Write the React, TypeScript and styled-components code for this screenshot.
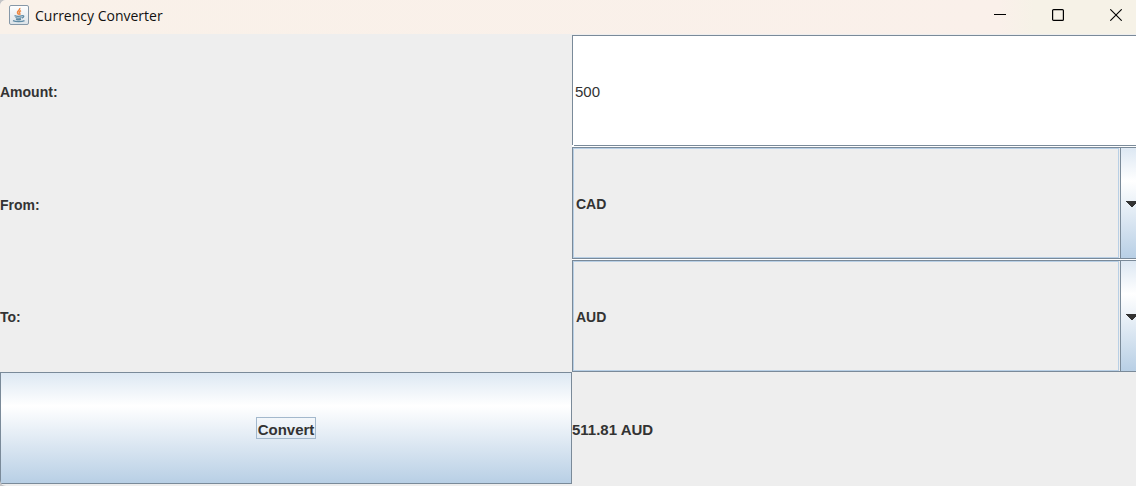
import React, { useState } from "react";
import styled, { createGlobalStyle } from "styled-components";

const line = "#7a8a99";
const soft = "#b8cfe5";
const steel = "linear-gradient(to bottom, #dde8f3 0%, #ffffff 30%, #b8cfe5 100%)";

const GlobalStyle = createGlobalStyle`
  *, *::before, *::after { box-sizing: border-box; }
  body { margin: 0; background: #c4c4c6; }
`;

const Window = styled.main`
  display: flex;
  flex-direction: column;
  min-height: 100vh;
  overflow: hidden;
  border-radius: 6px 0 0 6px;
  background: #eeeeee;
  color: #333333;
  font-family: "Liberation Sans", Arial, sans-serif;
  font-size: 15px;
  line-height: 20px;
`;

const TitleBar = styled.header`
  display: flex;
  align-items: center;
  height: 34px;
  padding: 0 0 4px 9px;
  gap: 6px;
  background: linear-gradient(to right, #f9f1e9 0%, #faf0ea 88%, #f6f2e7 91%);
`;

const Title = styled.h1`
  flex: 1;
  margin: 0;
  padding-top: 2px;
  color: #111111;
  font-family: "Open Sans", "Noto Sans", sans-serif;
  font-size: 14px;
  font-weight: 400;
  line-height: 20px;
`;

const WindowButton = styled.button`
  display: grid;
  place-items: center;
  width: 58px;
  height: 30px;
  padding: 0;
  border: 0;
  background: transparent;
`;

const WindowButtons = styled.div`
  display: flex;
  margin-right: -9px;
`;

const Form = styled.form`
  flex: 1;
  display: grid;
  grid-template-columns: 1fr 1fr;
  grid-template-rows: 112fr 113fr 112fr 112fr;
  margin-right: -8px;
  padding: 1px 0 2px;
`;

const Label = styled.label`
  display: flex;
  align-items: center;
  padding-top: 2px;
  font-size: 14px;
  font-weight: 700;
`;

const Result = styled.output`
  display: flex;
  align-items: center;
  padding-top: 4px;
  font-weight: 700;
`;

const AmountInput = styled.input`
  width: 100%;
  min-width: 0;
  margin-bottom: 1px;
  padding: 3px 3px 1px;
  border: 0;
  border-radius: 0;
  box-shadow: 0 1px #ffffff;
  outline: 0;
  background:
    linear-gradient(${line}, ${line}) 0 0 / 100% 1px no-repeat,
    linear-gradient(${line}, ${line}) 0 0 / 1px calc(100% - 1px) no-repeat,
    linear-gradient(${line}, ${line}) 2px 100% / 100% 1px no-repeat,
    #ffffff;
  color: #333333;
  font: inherit;
`;

const Combo = styled.div<{ $last?: boolean }>`
  display: grid;
  grid-template-columns: 1fr 23px;
  margin-bottom: ${(p) => (p.$last ? "0" : "1px")};
  border: 1px solid ${line};
  box-shadow: ${(p) => (p.$last ? "none" : "0 1px #ffffff")};
`;

const ComboSelect = styled.select`
  grid-area: 1 / 1 / 2 / 3;
  z-index: 1;
  width: 100%;
  padding: 1px 24px 0 3px;
  appearance: none;
  border: 0;
  border-radius: 0;
  outline: 0;
  background: transparent;
  color: #333333;
  font: inherit;
  font-size: 14px;
  font-weight: 700;
`;

const ComboFace = styled.span`
  grid-area: 1 / 1 / 2 / 2;
  margin-right: 1px;
  border: 1px solid ${soft};
`;

const ComboArrow = styled.span`
  grid-area: 1 / 2 / 2 / 3;
  display: grid;
  place-items: center;
  padding-top: 1px;
  border-left: 1px solid ${line};
  background: ${steel};
`;

const ConvertButton = styled.button`
  display: grid;
  place-items: center;
  padding: 0;
  border: 1px solid ${line};
  border-radius: 0;
  background: ${steel};
  color: #333333;
  font: inherit;
  font-weight: 700;
`;

const FocusText = styled.span`
  min-width: 60px;
  height: 22px;
  padding-top: 2px;
  border: 1px solid #a3b8cc;
`;

const JavaIcon = () => (
  <svg width="20" height="20" viewBox="0 0 20 20" aria-hidden="true">
    <defs>
      <linearGradient id="tile" x1="0" y1="0" x2="0" y2="1">
        <stop offset="0" stopColor="#ffffff" />
        <stop offset="1" stopColor="#dce3e8" />
      </linearGradient>
    </defs>
    <rect x="0.5" y="0.5" width="19" height="19" rx="1.5" fill="url(#tile)" stroke="#8698a8" />
    <path d="M10.800 3c.6 2-2.800 2.800-2.300 4.700.2.800 1 1.300 1.200 2M12 5.700c-1.500.8-2 1.600-1.200 2.600.4.600.2 1-.3 1.500" fill="none" stroke="#ee8641" strokeWidth="1.500" />
    <path d="M5.500 10.700c2 .8 5.500.7 8 0M6.500 12.500c2 .7 4.500.7 6 0M7 14.100c1.500.6 3.500.6 5 0M13.300 10.800c2-.6 2 1.700-.4 2.200M4 15.600c2.500 1.200 9 1.200 11.500 0" fill="none" stroke="#5f8ba5" strokeWidth="1.300" />
  </svg>
);

const DownArrow = () => (
  <svg width="12" height="6" viewBox="0 0 12 6" shapeRendering="crispEdges" aria-hidden="true">
    <path d="M0 0h12v1h-1v1h-1v1h-1v1h-1v1h-1v1h-2v-1h-1v-1h-1v-1h-1v-1h-1v-1h-1z" fill="#333333" />
  </svg>
);

const currencies = ["CAD", "AUD", "USD", "EUR", "GBP", "JPY"];

type CurrencyComboProps = {
  id: string;
  value: string;
  last?: boolean;
  onChange: (value: string) => void;
};

function CurrencyCombo({ id, value, last, onChange }: CurrencyComboProps) {
  return (
    <Combo $last={last}>
      <ComboFace />
      <ComboArrow><DownArrow /></ComboArrow>
      <ComboSelect id={id} value={value} onChange={(e) => onChange(e.target.value)}>
        {currencies.map((c) => <option key={c}>{c}</option>)}
      </ComboSelect>
    </Combo>
  );
}

export default function App() {
  const [amount, setAmount] = useState("500");
  const [from, setFrom] = useState("CAD");
  const [to, setTo] = useState("AUD");

  return (
    <>
      <GlobalStyle />
      <Window>
        <TitleBar>
          <JavaIcon />
          <Title>Currency Converter</Title>
          <WindowButtons>
            <WindowButton type="button" aria-label="Minimize">
              <svg width="12" height="12" viewBox="0 0 12 12"><path d="M0 5.500h12" stroke="#000" /></svg>
            </WindowButton>
            <WindowButton type="button" aria-label="Maximize">
              <svg width="12" height="12" viewBox="0 0 12 12"><rect x="0.600" y="0.600" width="10.800" height="10.800" rx="1" fill="none" stroke="#000" strokeWidth="1.200" /></svg>
            </WindowButton>
            <WindowButton type="button" aria-label="Close">
              <svg width="12" height="12" viewBox="0 0 12 12"><path d="M.3.3l11.400 11.400M11.700.3L.3 11.700" stroke="#000" strokeWidth="1.100" /></svg>
            </WindowButton>
          </WindowButtons>
        </TitleBar>
        <Form onSubmit={(e) => e.preventDefault()}>
          <Label htmlFor="amount">Amount:</Label>
          <AmountInput id="amount" value={amount} onChange={(e) => setAmount(e.target.value)} />
          <Label htmlFor="from">From:</Label>
          <CurrencyCombo id="from" value={from} onChange={setFrom} />
          <Label htmlFor="to">To:</Label>
          <CurrencyCombo id="to" value={to} onChange={setTo} last />
          <ConvertButton type="submit"><FocusText>Convert</FocusText></ConvertButton>
          <Result htmlFor="amount from to">511.81 AUD</Result>
        </Form>
      </Window>
    </>
  );
}
